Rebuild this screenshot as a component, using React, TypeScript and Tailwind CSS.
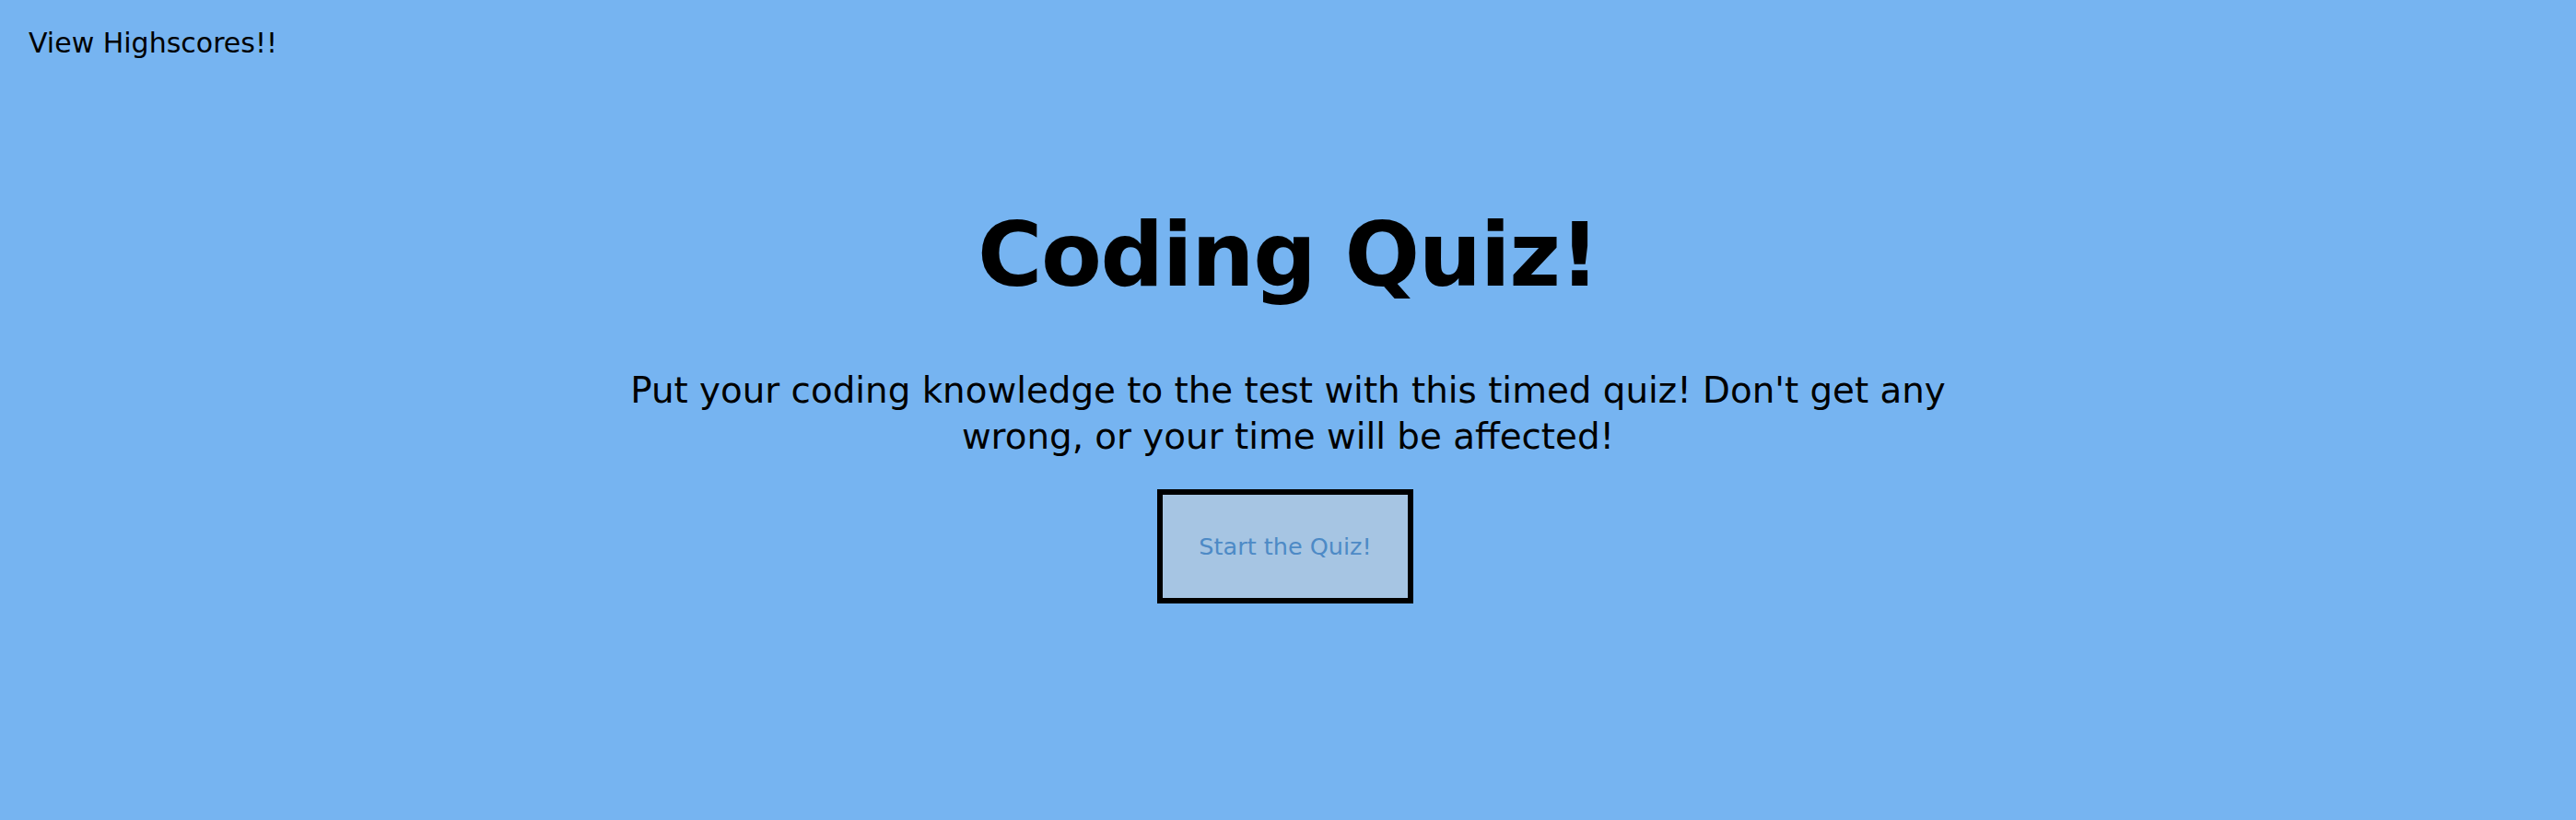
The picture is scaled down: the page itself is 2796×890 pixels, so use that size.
import React from "react";

export default function App() {
  return (
    <div
      className="min-h-screen w-full bg-[#76b4f1] text-black"
      style={{ fontFamily: '"DejaVu Sans", Verdana, sans-serif' }}
    >
      <header className="pl-[31px] pt-[29px]">
        <a className="block text-[30px] leading-[36px] text-black cursor-pointer">
          View Highscores!!
        </a>
      </header>
      <main className="flex flex-col items-center">
        <h1 className="mt-[157px] text-[96px] leading-[110px] font-bold tracking-[-1.4px]">
          Coding Quiz!
        </h1>
        <p className="mt-[67px] w-[1460px] text-center text-[38.8px] leading-[50px]">
          Put your coding knowledge to the test with this timed quiz! Don't get
          any wrong, or your time will be affected!
        </p>
        <button className="mt-[32px] mr-[6px] w-[278px] h-[124px] border-[6px] border-black bg-[#a6c5e3] text-[#4d8ac6] text-[25.5px] flex items-center justify-center">
          Start the Quiz!
        </button>
      </main>
    </div>
  );
}
